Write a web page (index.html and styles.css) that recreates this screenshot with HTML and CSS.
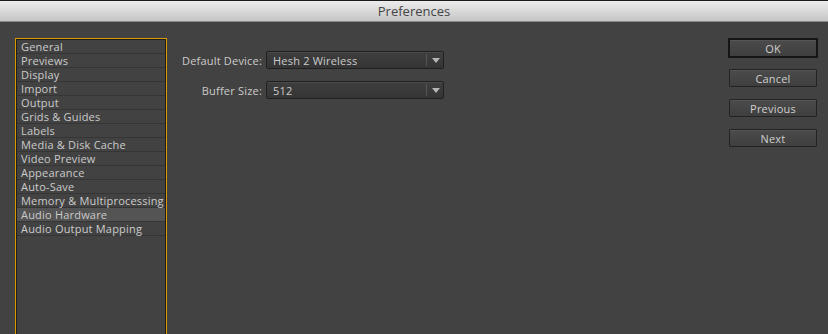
FILE: index.html
```html
<!DOCTYPE html>
<html lang="en">
<head>
  <meta charset="UTF-8" />
  <title>Preferences</title>
  <link rel="stylesheet" href="styles.css">
</head>
<body>
  <!-- Barra de título de la ventana -->
  <div class="titlebar">Preferences</div>

  <div class="dialog">
    <!-- Lista de secciones -->
    <ul class="sections">
      <li>General</li>
      <li>Previews</li>
      <li>Display</li>
      <li>Import</li>
      <li>Output</li>
      <li>Grids &amp; Guides</li>
      <li>Labels</li>
      <li>Media &amp; Disk Cache</li>
      <li>Video Preview</li>
      <li>Appearance</li>
      <li>Auto-Save</li>
      <li>Memory &amp; Multiprocessing</li>
      <li class="selected">Audio Hardware</li>
      <li>Audio Output Mapping</li>
    </ul>

    <!-- Ajustes de la sección -->
    <div class="settings">
      <label class="field-label">Default Device:</label>
      <div class="select">
        <span class="select-value">Hesh 2 Wireless</span>
        <span class="select-arrow"></span>
      </div>
      <label class="field-label">Buffer Size:</label>
      <div class="select">
        <span class="select-value">512</span>
        <span class="select-arrow"></span>
      </div>
    </div>

    <!-- Botones del diálogo -->
    <div class="actions">
      <button class="btn btn-default">OK</button>
      <button class="btn">Cancel</button>
      <button class="btn">Previous</button>
      <button class="btn">Next</button>
    </div>
  </div>
</body>
</html>
```

FILE: styles.css
```css
* {
  margin: 0;
  padding: 0;
  box-sizing: border-box;
}
html, body {
  width: 100%;
  height: 100%;
  overflow: hidden;
}
body {
  background: #424242;
  font-family: "Open Sans", "DejaVu Sans", sans-serif;
  font-size: 11px;
  letter-spacing: 0.2px;
  color: #cbcbcb;
  display: flex;
  flex-direction: column;
}

/* Barra de título */
.titlebar {
  height: 22px;
  flex: none;
  border-top: 1px solid #1a1a1a;
  border-bottom: 1px solid #8a8a8a;
  background: linear-gradient(#ececec, #c6c6c6);
  color: #444;
  font-size: 13px;
  letter-spacing: 0;
  line-height: 20px;
  text-align: center;
}

/* Contenido del diálogo */
.dialog {
  flex: 1;
  display: flex;
  align-items: flex-start;
  padding: 16px 10px 0 15px;
  overflow: hidden;
}

/* Lista de secciones (borde naranja de foco) */
.sections {
  list-style: none;
  width: 152px;
  height: 330px;
  flex: none;
  border: 1px solid #d99a00;
  box-shadow: inset 0 0 0 1px #1e1e1e;
  padding: 1px;
}
.sections li {
  height: 14px;
  line-height: 13px;
  padding-left: 4px;
  border-bottom: 1px solid #353535;
  white-space: nowrap;
}
.sections li.selected {
  background: #545454;
}

/* Campos */
.settings {
  display: grid;
  grid-template-columns: 90px 178px;
  column-gap: 4px;
  row-gap: 12px;
  align-items: center;
  margin-left: 5px;
  margin-top: 13px;
}
.field-label {
  text-align: right;
  white-space: nowrap;
}
.select {
  height: 18px;
  display: flex;
  align-items: center;
  border: 1px solid #202020;
  border-radius: 2px;
  background: linear-gradient(#3e3e3e, #353535);
  box-shadow: inset 0 1px 0 #4a4a4a;
}
.select-value {
  flex: 1;
  padding-left: 6px;
}
.select-arrow {
  width: 17px;
  height: 12px;
  border-left: 1px solid #555;
  position: relative;
}
.select-arrow::after {
  content: "";
  position: absolute;
  left: 5px;
  top: 4px;
  border-left: 4px solid transparent;
  border-right: 4px solid transparent;
  border-top: 5px solid #b5b5b5;
}

/* Botones */
.actions {
  margin-left: auto;
  display: flex;
  flex-direction: column;
  gap: 10px;
}
.btn {
  width: 90px;
  height: 20px;
  font: inherit;
  letter-spacing: inherit;
  color: #cfcfcf;
  background: linear-gradient(#4b4b4b, #3f3f3f);
  border: 1px solid #232323;
  border-radius: 1px;
  box-shadow: inset 0 1px 0 #555;
}
.btn-default {
  border: 2px solid #151515;
}
.btn:not(.btn-default) {
  width: 88px;
  height: 18px;
  margin: 1px;
}
```
